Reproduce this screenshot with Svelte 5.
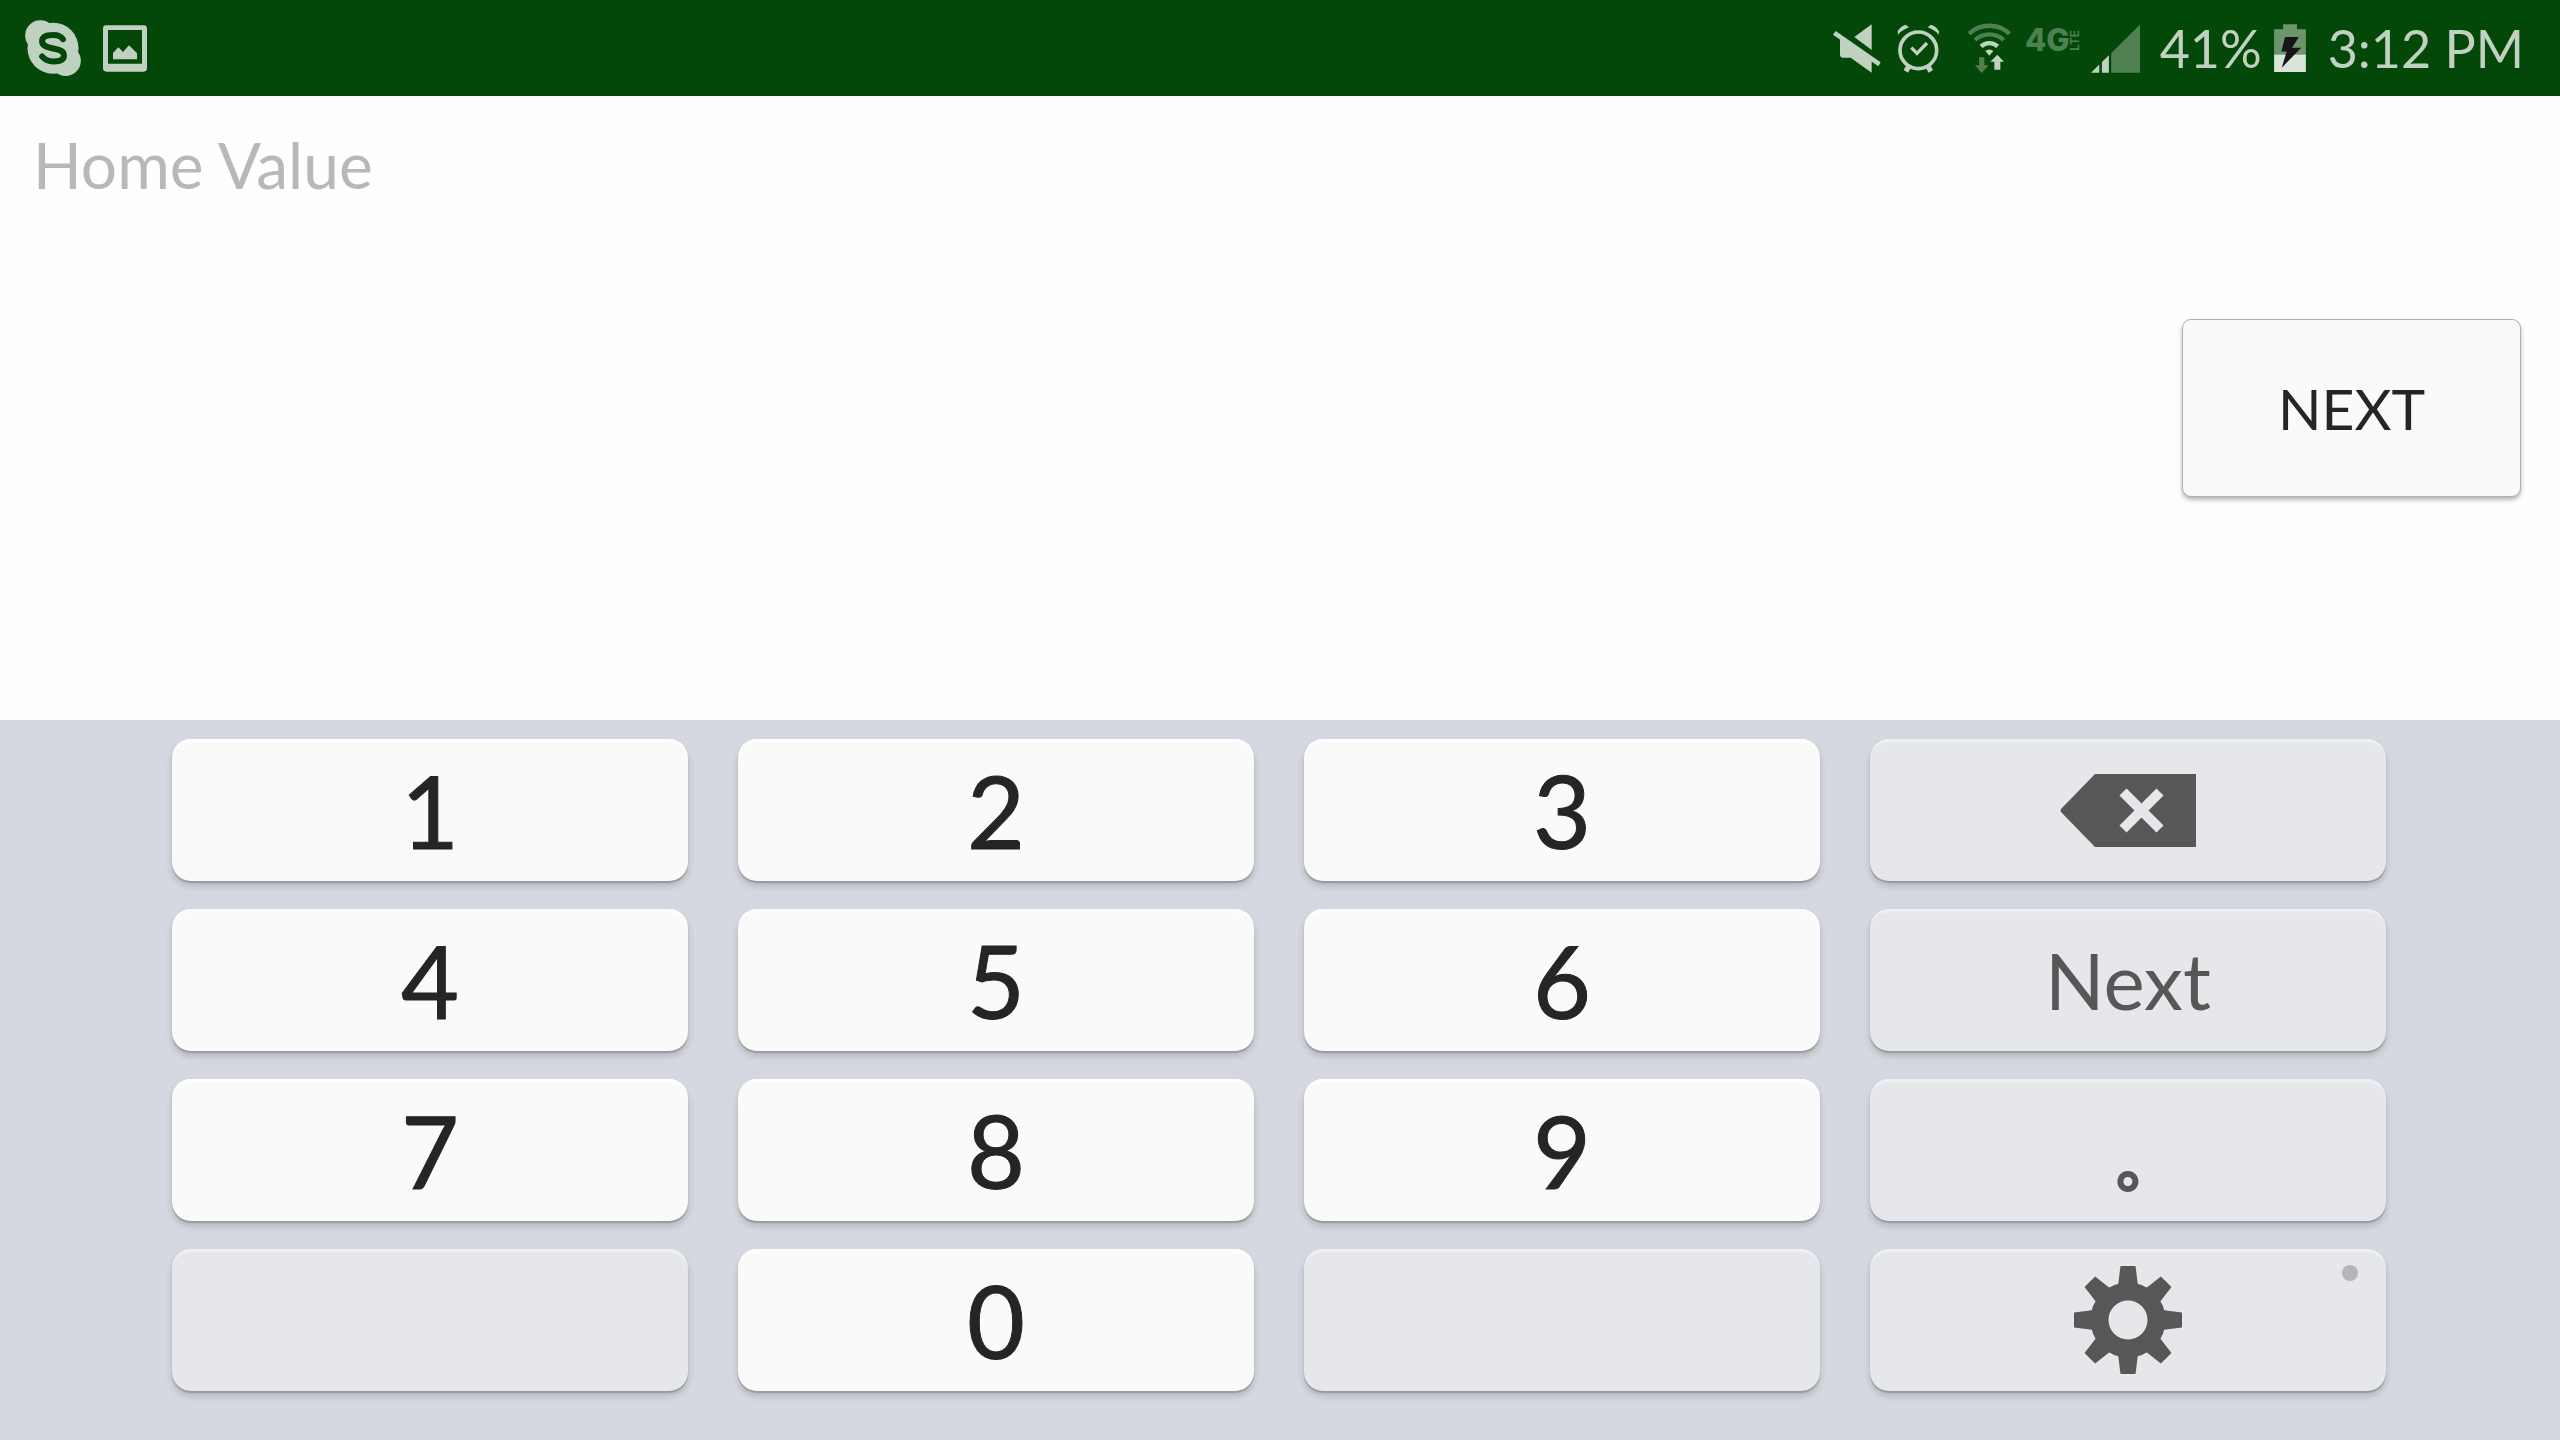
<script lang="ts">
  type Key = { id: string; kind: 'digit' | 'fn'; text?: string; icon?: 'backspace' | 'gear'; label?: string };

  const digit = (n: string): Key => ({ id: n, kind: 'digit', text: n });

  const keys: Key[] = [
    digit('1'), digit('2'), digit('3'),
    { id: 'backspace', kind: 'fn', icon: 'backspace', label: 'Backspace' },
    digit('4'), digit('5'), digit('6'),
    { id: 'next', kind: 'fn', text: 'Next' },
    digit('7'), digit('8'), digit('9'),
    { id: 'point', kind: 'fn', text: '.' },
    { id: 'blank-left', kind: 'fn', label: 'Unused' },
    digit('0'),
    { id: 'blank-right', kind: 'fn', label: 'Unused' },
    { id: 'settings', kind: 'fn', icon: 'gear', label: 'Keyboard settings' },
  ];

  const teeth = [0, 45, 90, 135, 180, 225, 270, 315];

  let value = $state('');

  function press(key: Key) {
    if (key.kind === 'digit' || key.id === 'point') value += key.text;
    else if (key.id === 'backspace') value = value.slice(0, -1);
  }
</script>

<div class="screen">
  <header class="status">
    <div class="notices">
      <svg class="skype" viewBox="75 59 168 169" role="img" aria-label="Skype">
        <g fill="#c0d1c1">
          <circle cx="159" cy="144" r="77" />
          <circle cx="121" cy="106" r="46" />
          <circle cx="197" cy="182" r="46" />
        </g>
        <path
          d="M189 117C183 107 172 104 160 104C140 104 126 110 126 123C126 138 143 141 160 145C178 149 192 152 192 166C192 180 176 184 160 184C146 184 135 180 126 169"
          fill="none" stroke="#034808" stroke-width="18" stroke-linecap="round" />
      </svg>
      <svg class="picture" viewBox="309 73 132 141" role="img" aria-label="Picture saved" fill="#c0d1c1">
        <path fill-rule="evenodd" d="M319 74H431Q441 74 441 84V203Q441 213 431 213H319Q309 213 309 203V84Q309 74 319 74ZM324 88V189H426V88Z" />
        <path d="M339 176V157L355 140L369 154L387 134L411 158V176Z" />
      </svg>
    </div>

    <div class="indicators">
      <svg class="mute" viewBox="69 70 144 147" role="img" aria-label="Muted" fill="#c0d1c1">
        <path d="M185 71V148L133 109Z" />
        <path d="M90 110L185 176V216L122 171H97Q90 170 90 163Z" />
        <path d="M77 91L212 185L205 197L69 102Z" />
      </svg>
      <svg class="alarm" viewBox="261 70 129 147" role="img" aria-label="Alarm set" fill="#c0d1c1">
        <circle cx="325" cy="149" r="55" fill="none" stroke="#c0d1c1" stroke-width="11" />
        <path d="M304 141L321 158L351 127" fill="none" stroke="#c0d1c1" stroke-width="10" />
        <path d="M263 92Q272 76 287 72L297 80Q276 88 264 102Z" />
        <path d="M387 92Q378 76 363 72L353 80Q374 88 386 102Z" />
        <path d="M288 195L302 203L294 216L281 208Z" />
        <path d="M362 195L348 203L356 216L369 208Z" />
      </svg>
      <svg class="wifi" viewBox="474 68 129 150" role="img" aria-label="Wi-Fi">
        <g fill="none" stroke-width="13">
          <path d="M477.500 100A89 89 0 0 1 598.500 100" stroke="#4f8052" />
          <path d="M495 119A63 63 0 0 1 581 119" stroke="#4f8052" />
          <path d="M513 138A37 37 0 0 1 563 138" stroke="#c0d1c1" />
        </g>
        <path d="M526 152A18 18 0 0 1 550 152L538 166Z" fill="#c0d1c1" />
        <path d="M507 171H523V195H536L515 218L495 195H507Z" fill="#4f8052" />
        <path d="M562 163L582 184H571V208H553V184H541Z" fill="#c0d1c1" />
      </svg>
      <span class="network"><b>4G</b><small>LTE</small></span>
      <svg class="signal" viewBox="839 69 148 147" role="img" aria-label="Signal strength">
        <path d="M987 70V216H900V157Z" fill="#4f8052" />
        <path d="M893 163V216H872V183ZM864 191V216H839Z" fill="#c0d1c1" />
      </svg>
      <span class="percent">41%</span>
      <svg class="battery" viewBox="402 71 96 145" role="img" aria-label="Battery charging">
        <path d="M429 72H471V87H498V163H402V87H429Z" fill="#6b956d" />
        <path d="M402 163H498V216H402Z" fill="#d9e4da" />
        <path d="M435 110H477L456 143H484L425 203L440 154H424Z" fill="#151515" />
      </svg>
      <time>3:12 PM</time>
    </div>
  </header>

  <main class="form">
    <input class="field" type="text" aria-label="Home Value" placeholder="Home Value" bind:value />
    <button class="submit" type="button">NEXT</button>
  </main>

  <section class="keypad" aria-label="Number pad">
    {#each keys as key (key.id)}
      <button
        type="button"
        class={['key', key.kind, key.id === 'point' && 'point']}
        aria-label={key.label}
        onclick={() => press(key)}
      >
        {#if key.icon === 'backspace'}
          <svg class="backspace" viewBox="0 0 136 73" aria-hidden="true">
            <path d="M35 0H136V73H35L1 38Q0 36.500 1 35Z" fill="#575757" />
            <path d="M63 18L100 55M100 18L63 55" stroke="#e6e7eb" stroke-width="10" />
          </svg>
        {:else if key.icon === 'gear'}
          <svg class="gear" viewBox="-54 -54 108 108" aria-hidden="true">
            <circle r="28.500" fill="none" stroke="#575757" stroke-width="18" />
            {#each teeth as angle}
              <path d="M-10 -34L-7.500 -54H7.500L10 -34Z" fill="#575757" transform="rotate({angle})" />
            {/each}
          </svg>
          <span class="more"></span>
        {:else if key.text}
          {key.text}
        {/if}
      </button>
    {/each}
  </section>
</div>

<style>
  :global(body) {
    margin: 0;
  }

  .screen {
    display: flex;
    flex-direction: column;
    min-height: 100vh;
    background: #fefefe;
    font-family: Lato, "Open Sans", sans-serif;
  }

  svg {
    display: block;
    flex: none;
  }

  button,
  input {
    font-family: inherit;
    margin: 0;
  }

  .status {
    box-sizing: border-box;
    display: flex;
    align-items: center;
    justify-content: space-between;
    height: 96px;
    padding: 0 36px 0 25px;
    background: #034808;
    color: #c0d1c1;
    font-size: 52px;
    line-height: 56px;
  }

  .notices,
  .indicators {
    display: flex;
    align-items: center;
  }

  .notices {
    gap: 22px;
  }

  .skype { width: 56px; height: 56px; }
  .picture { width: 44px; height: 47px; }
  .mute { width: 48px; height: 49px; }
  .alarm { width: 43px; height: 49px; margin-left: 16px; }
  .wifi { width: 43px; height: 50px; margin-left: 28px; }
  .signal { width: 49px; height: 49px; margin-left: 11px; }
  .percent { margin-left: 20px; }
  .battery { width: 32px; height: 48px; margin: 0 22px 0 12px; }

  .network {
    display: flex;
    align-items: center;
    margin-left: 14px;
    padding-bottom: 16px;
    color: #4f8052;
    font-family: Inter, sans-serif;
    line-height: 24px;
  }

  .network b {
    font-size: 31px;
    font-weight: 800;
  }

  .network small {
    font-size: 12px;
    font-weight: 600;
    line-height: 10px;
    writing-mode: vertical-rl;
    transform: rotate(180deg);
  }

  .form {
    flex: 1;
    display: flex;
    flex-direction: column;
    align-items: flex-end;
    gap: 111px;
    padding: 24px 39px 24px 33px;
  }

  .field {
    box-sizing: border-box;
    width: 100%;
    height: 88px;
    padding: 0;
    border: 0;
    outline: 0;
    background: none;
    color: #252525;
    font-size: 64px;
  }

  .field::placeholder {
    color: #b8b8b8;
    opacity: 1;
  }

  .submit {
    min-width: 339px;
    height: 178px;
    border: 1px solid #b0b0b0;
    border-radius: 9px;
    background: #fafafa;
    box-shadow: 0 3px 4px rgba(0, 0, 0, 0.28);
    color: #252525;
    font-size: 57px;
  }

  .keypad {
    display: grid;
    grid-template-columns: repeat(4, 1fr);
    grid-auto-rows: 142px;
    gap: 28px 50px;
    padding: 19px 174px 49px 172px;
    background: #d5d8e0;
  }

  .key {
    position: relative;
    display: flex;
    align-items: center;
    justify-content: center;
    padding: 0;
    border: 0;
    border-radius: 19px;
    box-shadow:
      inset 0 4px 2px -1px rgba(255, 255, 255, 0.9),
      0 2px 1px #999ba0,
      0 5px 7px rgba(0, 0, 0, 0.16);
  }

  .digit {
    background: #fafafa;
    color: #252525;
    font-size: 100px;
    -webkit-text-stroke: 1px #252525;
  }

  .fn {
    background: #e6e7eb;
    box-shadow:
      inset 0 4px 2px -1px rgba(255, 255, 255, 0.4),
      0 2px 1px #999ba0,
      0 5px 7px rgba(0, 0, 0, 0.16);
    color: #575757;
    font-size: 78px;
  }

  /* The decimal point is an open ring: filled with the key colour, outlined in grey. */
  .point {
    padding-bottom: 16px;
    color: #e6e7eb;
    font-size: 120px;
    line-height: 120px;
    -webkit-text-stroke: 6px #575757;
  }

  .backspace { width: 136px; height: 73px; }
  .gear { width: 108px; height: 108px; }

  .more {
    position: absolute;
    top: 16px;
    right: 28px;
    width: 16px;
    height: 16px;
    border-radius: 50%;
    background: #b4b5b9;
  }
</style>
